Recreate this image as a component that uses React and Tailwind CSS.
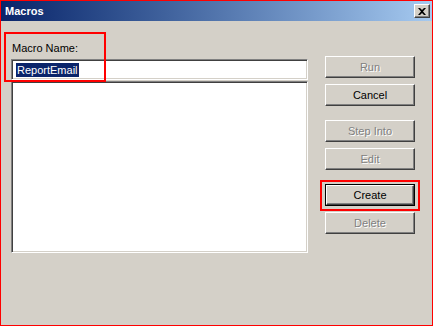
import React from "react";

const font = { fontFamily: '"Liberation Sans", Arial, sans-serif' };

function Btn({ label, disabled, isDefault }) {
  const inner = (
    <div
      className={
        "flex items-center justify-center w-full h-full bg-[#d4d0c8] border border-t-white border-l-white border-b-[#404040] border-r-[#404040] shadow-[inset_-1px_-1px_0_#808080,inset_1px_1px_0_#d4d0c8] text-[11px] leading-[13px] " +
        (disabled ? "text-[#808080] [text-shadow:1px_1px_0_#ffffff]" : "text-black")
      }
    >
      {label}
    </div>
  );
  if (isDefault) {
    return (
      <div className="relative w-[90px] h-[22px]">
        <div className="w-full h-full border border-black">{inner}</div>
        <div className="absolute left-[-5px] top-[-4px] w-[100px] h-[31px] border-2 border-[#ff0000] pointer-events-none" />
      </div>
    );
  }
  return <div className="w-[90px] h-[22px]">{inner}</div>;
}

export default function App() {
  return (
    <div
      className="w-[433px] h-[326px] border border-[#ff0000] bg-[#d4d0c8] flex flex-col overflow-hidden"
      style={font}
    >
      <div className="h-[20px] shrink-0 bg-linear-to-r from-[#0a246a] to-[#a6caf0] flex items-center justify-between pl-[4px] pr-[2px]">
        <span className="text-white font-bold text-[11px] leading-[13px]">Macros</span>
        <div className="w-[16px] h-[14px] bg-[#d4d0c8] border border-t-white border-l-white border-b-[#404040] border-r-[#404040] shadow-[inset_-1px_-1px_0_#808080] flex items-center justify-center">
          <svg width="8" height="7" viewBox="0 0 8 7">
            <path d="M0 0h2l2 2 2-2h2L5 3.5 8 7H6L4 5 2 7H0l3-3.5z" fill="#000" />
          </svg>
        </div>
      </div>
      <div className="flex flex-row pl-[10px] relative">
        <div className="flex flex-col w-[297px] pt-[21px]">
          <div className="text-[11px] leading-[13px] text-black pl-[1px]">Macro Name:</div>
          <div className="mt-[4px] h-[21px] bg-white border border-t-[#808080] border-l-[#808080] border-b-white border-r-white shadow-[inset_1px_1px_0_#404040,inset_-1px_-1px_0_#d4d0c8] flex items-center pl-[4px]">
            <span className="bg-[#0a246a] text-white text-[11px] leading-[14px] px-[1px]">ReportEmail</span>
          </div>
          <div className="mt-[1px] h-[172px] bg-white border border-t-[#808080] border-l-[#808080] border-b-white border-r-white shadow-[inset_1px_1px_0_#404040,inset_-1px_-1px_0_#d4d0c8]" />
        </div>
        <div className="flex flex-col ml-[17px] pt-[35px]">
          <Btn label="Run" disabled />
          <div className="mt-[6px]"><Btn label="Cancel" /></div>
          <div className="mt-[14px]"><Btn label="Step Into" disabled /></div>
          <div className="mt-[6px]"><Btn label="Edit" disabled /></div>
          <div className="mt-[14px]"><Btn label="Create" isDefault /></div>
          <div className="mt-[6px]"><Btn label="Delete" disabled /></div>
        </div>
        <div className="absolute left-[3px] top-[11px] w-[102px] h-[50px] border-2 border-[#ff0000] pointer-events-none" />
      </div>
    </div>
  );
}
